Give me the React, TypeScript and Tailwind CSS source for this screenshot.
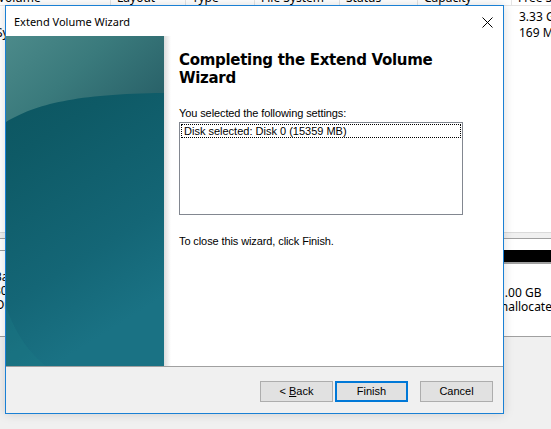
import React from "react";

const ui = "font-['Liberation_Sans',Arial,sans-serif]";
const seg = "font-['Noto_Sans','Open_Sans',sans-serif]";

const columns = [
  { label: "Volume", w: "w-[111px]", pad: "-ml-[8px]" },
  { label: "Layout", w: "w-[75px]", pad: "" },
  { label: "Type", w: "w-[69px]", pad: "" },
  { label: "File System", w: "w-[85px]", pad: "" },
  { label: "Status", w: "w-[78px]", pad: "" },
  { label: "Capacity", w: "w-[94px]", pad: "" },
  { label: "Free Space", w: "w-[60px]", pad: "" },
];

const Banner = () => (
  <svg width="158" height="330" viewBox="0 0 158 330" className="block shrink-0">
    <defs>
      <linearGradient id="base" x1="0" y1="0" x2="0.3" y2="1">
        <stop offset="0" stopColor="#0b525c" />
        <stop offset="0.35" stopColor="#0e5a66" />
        <stop offset="0.75" stopColor="#146676" />
        <stop offset="1" stopColor="#1a7284" />
      </linearGradient>
      <linearGradient id="top" x1="0" y1="0" x2="1" y2="0.6">
        <stop offset="0" stopColor="#4c8a8a" />
        <stop offset="0.5" stopColor="#3a7a7c" />
        <stop offset="1" stopColor="#2a636a" />
      </linearGradient>
    </defs>
    <rect width="158" height="330" fill="url(#base)" />
    <path d="M0,0 H158 V57 C70,58 30,68 0,86 Z" fill="url(#top)" />
    <path d="M0,270 C10,300 25,318 40,330 H0 Z" fill="#1c7a86" opacity="0.35" />
  </svg>
);

const Btn = ({ children, focus }: { children: React.ReactNode; focus?: boolean }) => (
  <button
    className={`w-[73px] h-[21px] bg-[#e1e1e1] text-[11px] text-black ${ui} ${
      focus ? "border-2 border-[#0078d7]" : "border border-[#adadad]"
    }`}
  >
    {children}
  </button>
);

export default function App() {
  return (
    <div className={`relative w-[551px] h-[429px] overflow-hidden bg-[#f0f0f0] ${seg}`}>
      {/* disk management behind */}
      <div className="flex flex-col">
        <div className="h-[6px] overflow-hidden bg-white border-b border-[#e5e5e5]">
          <div className="flex -mt-[11px] h-[17px]">
            {columns.map((c) => (
              <div
                key={c.label}
                className={`${c.w} shrink-0 border-r border-[#e5e5e5] pl-[6px] text-[12px] leading-[17px] text-black overflow-hidden whitespace-nowrap`}
              >
                <span className={`block ${c.pad}`}>{c.label}</span>
              </div>
            ))}
          </div>
        </div>
        <div className="h-[226px] bg-white text-[12px] leading-[16px] text-black pt-[3px]">
          <div className="flex h-[16px] whitespace-nowrap">
            <span className="w-[519px] shrink-0" />
            <span>3.33 GB</span>
          </div>
          <div className="flex h-[16px] whitespace-nowrap">
            <span className="w-[519px] shrink-0 -ml-[4px]">Sy</span>
            <span className="ml-[4px]">169 MB</span>
          </div>
        </div>
        <div className="h-[6px] bg-[#f0f0f0] border-t border-[#dadada]" />
        <div className="h-px bg-[#a0a0a0]" />
        <div className="h-[98px] bg-white border-b border-[#a0a0a0] flex pt-[11px]">
          <div className="w-[6px] shrink-0 overflow-hidden text-[12px] leading-[14px] text-black">
            <div className="h-px bg-[#a0a0a0] w-full" />
            <div className="h-[19px]" />
            <div className="-ml-[6px] whitespace-nowrap">Ba</div>
            <div className="-ml-[6px] whitespace-nowrap">30.</div>
            <div className="-ml-[5px] whitespace-nowrap">Or</div>
          </div>
          <div className="flex-1" />
          <div className="w-[58px] shrink-0 text-[12px] leading-[14px] text-black">
            <div className="h-[12px] bg-black" />
            <div className="h-[2px] bg-[#a0a0a0]" />
            <div className="h-[22px]" />
            <div className="ml-[5px] whitespace-nowrap">1.00 GB</div>
            <div className="-ml-[1px] whitespace-nowrap">Unallocated</div>
          </div>
        </div>
      </div>

      {/* wizard dialog */}
      <div className="absolute left-[5px] top-[5px] w-[499px] h-[409px] border border-[#1a80d4] bg-[#f0f0f0] flex flex-col shadow-[0_0_10px_rgba(0,0,0,0.15)]">
        <div className="h-[30px] bg-white flex items-center justify-between pl-[8px] pr-[10px]">
          <span className="text-[11px] text-black pt-[2px]">Extend Volume Wizard</span>
          <svg width="11" height="11" viewBox="0 0 11 11" className="mt-[3px]">
            <path d="M0.5,0.5 L10.5,10.5 M10.5,0.5 L0.5,10.5" stroke="#000" strokeWidth="1" />
          </svg>
        </div>
        <div className="h-[330px] bg-white flex">
          <Banner />
          <div className="w-[7px] shrink-0 bg-gradient-to-r from-[#dcdcdc] to-white" />
          <div className={`flex-1 pl-[8px] pt-[15px] ${ui}`}>
            <h1 className="font-['DejaVu_Sans',Verdana,sans-serif] font-bold text-[15px] tracking-[-0.3px] leading-[18px] text-black">
              Completing the Extend Volume
              <br />
              Wizard
            </h1>
            <p className="mt-[20px] text-[11px] leading-[13px] tracking-[-0.1px] text-black">
              You selected the following settings:
            </p>
            <div className="mt-[2px] w-[284px] h-[93px] border border-[#828790] bg-white p-px">
              <div className="border border-dotted border-black text-[11px] leading-[11px] px-[2px] pt-px text-black">
                Disk selected: Disk 0 (15359 MB)
              </div>
            </div>
            <p className="mt-[20px] text-[11px] leading-[13px] tracking-[-0.1px] text-black">
              To close this wizard, click Finish.
            </p>
          </div>
        </div>
        <div className="h-px bg-[#a0a0a0]" />
        <div className="flex-1 flex justify-end items-start pt-[14px] pr-[10px]">
          <Btn>
            &lt; <span className="underline">B</span>ack
          </Btn>
          <div className="w-[2px]" />
          <Btn focus>Finish</Btn>
          <div className="w-[12px]" />
          <Btn>Cancel</Btn>
        </div>
      </div>
    </div>
  );
}
